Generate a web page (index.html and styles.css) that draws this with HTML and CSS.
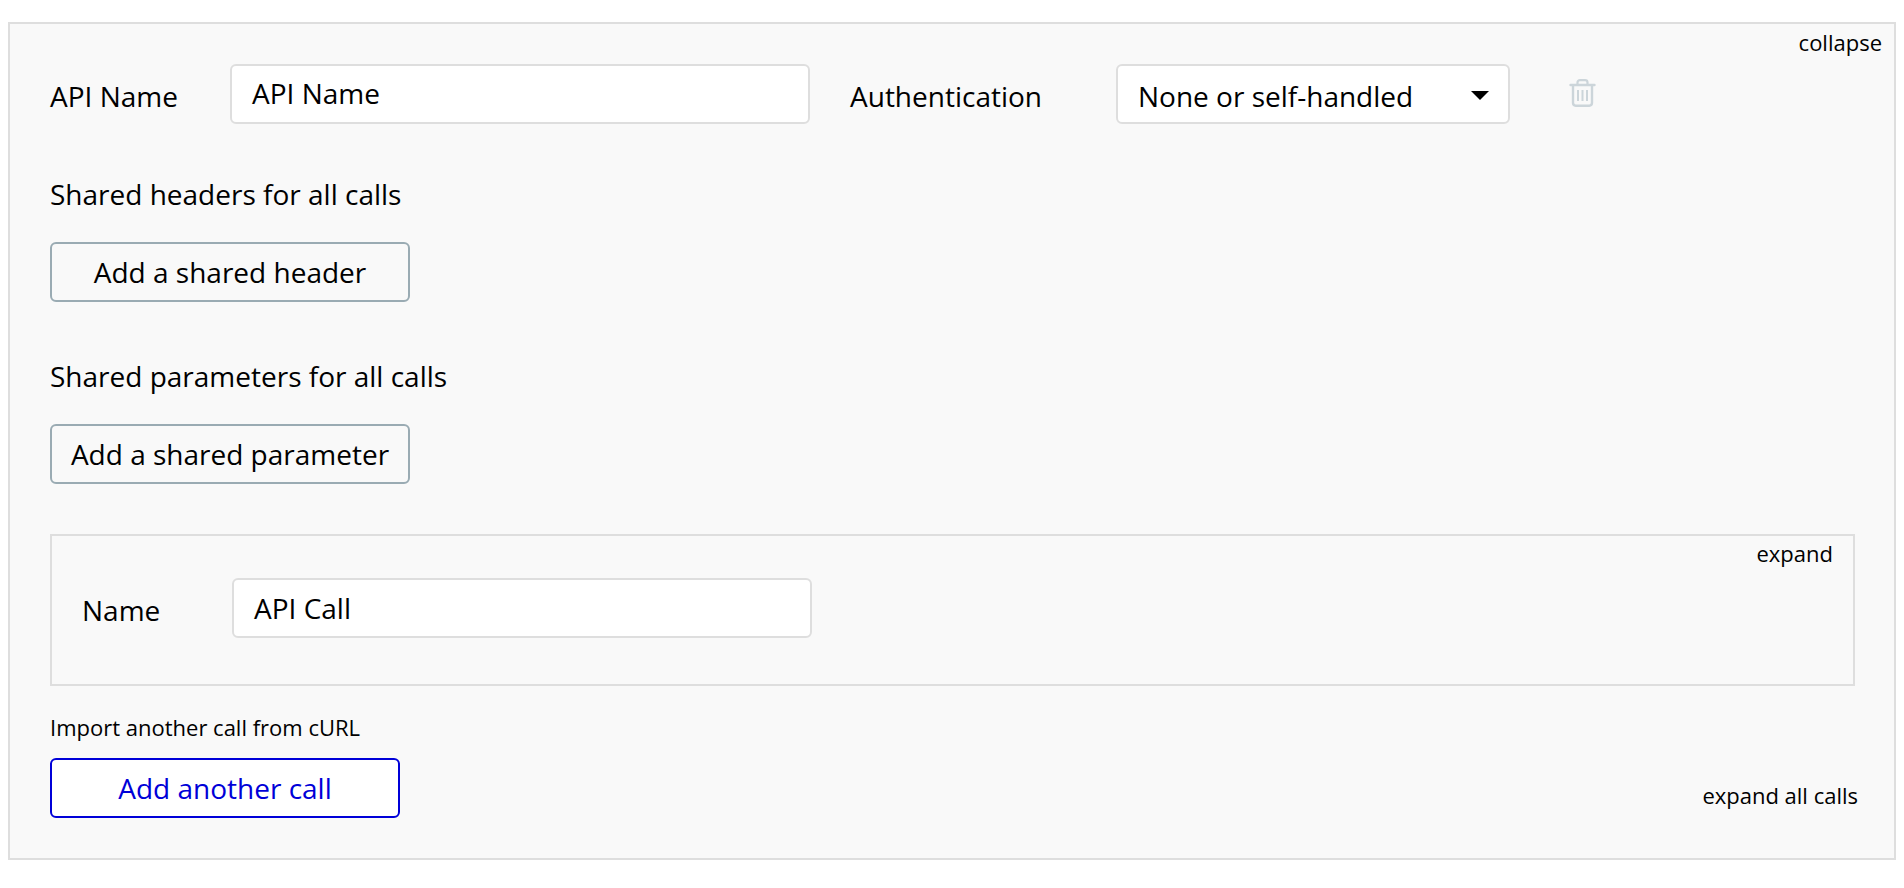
FILE: index.html
```html
<!DOCTYPE html>
<html lang="en">
<head>
<meta charset="utf-8">
<title>API Connector</title>
<link rel="stylesheet" href="styles.css">
</head>
<body>
<section class="panel">
  <a class="toggle toggle-panel">collapse</a>
  <div class="row top-row">
    <label class="label label-api">API Name</label>
    <div class="field field-api">API Name</div>
    <label class="label label-auth">Authentication</label>
    <div class="field select">
      <span>None or self-handled</span>
      <span class="caret"></span>
    </div>
    <svg class="trash" viewBox="0 0 27 28" width="27" height="28" aria-hidden="true">
      <path d="M1.500 6h24" fill="none" stroke="#ccd5da" stroke-width="2.400" stroke-linecap="round"/>
      <path d="M8.500 6V3.500C8.500 2 9.500 1.200 11 1.200h5C17.500 1.200 18.500 2 18.500 3.500V6" fill="none" stroke="#ccd5da" stroke-width="2.200"/>
      <path d="M4 6.500v17.300c0 1.700 1 2.900 2.700 2.900h13.600c1.700 0 2.700-1.200 2.700-2.900V6.500" fill="none" stroke="#ccd5da" stroke-width="2.400"/>
      <path d="M9 11v11M13.500 11v11M18 11v11" fill="none" stroke="#ccd5da" stroke-width="2"/>
    </svg>
  </div>
  <h3 class="heading heading-headers">Shared headers for all calls</h3>
  <button class="btn btn-shared">Add a shared header</button>
  <h3 class="heading heading-params">Shared parameters for all calls</h3>
  <button class="btn btn-shared">Add a shared parameter</button>
  <div class="call">
    <a class="toggle toggle-call">expand</a>
    <label class="label label-name">Name</label>
    <div class="field field-call">API Call</div>
  </div>
  <p class="import">Import another call from cURL</p>
  <div class="row foot-row">
    <button class="btn btn-add">Add another call</button>
    <a class="expand-all">expand all calls</a>
  </div>
</section>
</body>
</html>
```
FILE: styles.css
```css
* { box-sizing: border-box; }
html, body { margin: 0; background: #fff; }
body {
  padding: 22px 8px 0;
  font-family: "Open Sans", "Noto Sans", sans-serif;
  color: #000;
}
.panel {
  position: relative;
  height: 838px;
  padding: 40px 40px 0 40px;
  background: #f9f9f9;
  border: 2px solid #dedede;
}
.row { display: flex; }
.top-row { align-items: flex-start; height: 60px; }
.label { font-size: 28px; line-height: 38px; }
.label-api { width: 180px; padding-top: 13px; }
.label-auth { width: 266px; margin-left: 40px; padding-top: 13px; }
.field {
  height: 60px;
  background: #fff;
  border: 2px solid #dedede;
  border-radius: 6px;
  font-size: 28px;
  line-height: 54px;
  padding-left: 20px;
}
.field-api { width: 580px; }
.select {
  display: flex;
  align-items: center;
  justify-content: space-between;
  width: 394px;
  padding-top: 3px;
  padding-right: 19px;
  line-height: 52px;
}
.caret {
  width: 0;
  height: 0;
  border-left: 9px solid transparent;
  border-right: 9px solid transparent;
  border-top: 9px solid #000;
}
.trash { margin: 15px 0 0 59px; }
.heading {
  margin: 0;
  font-size: 28px;
  font-weight: 400;
  line-height: 38px;
}
.heading-headers { margin-top: 51px; }
.heading-params { margin-top: 55px; }
.btn {
  display: block;
  font-family: inherit;
  font-size: 28px;
  height: 60px;
  padding: 0;
  border-radius: 6px;
  cursor: pointer;
}
.btn-shared {
  width: 360px;
  margin-top: 29px;
  background: #f9f9f9;
  border: 2px solid #9aabb3;
  color: #000;
}
.call {
  position: relative;
  display: flex;
  align-items: flex-start;
  width: 1805px;
  height: 152px;
  margin-top: 50px;
  padding: 42px 0 0 30px;
  border: 2px solid #dedede;
}
.label-name { width: 150px; padding-top: 13px; }
.field-call { width: 580px; line-height: 56px; }
.import {
  margin: 26px 0 0;
  font-size: 22px;
  line-height: 30px;
}
.foot-row {
  justify-content: space-between;
  align-items: center;
  margin-top: 16px;
  height: 60px;
  padding-right: 1px;
  width: 1809px;
}
.btn-add {
  width: 350px;
  background: #fff;
  border: 2px solid #0000d8;
  color: #0000d8;
}
.expand-all { font-size: 22px; line-height: 30px; padding-top: 13px; }
.toggle { position: absolute; font-size: 22px; line-height: 30px; }
.toggle-panel { top: 3px; right: 12px; }
.toggle-call { top: 2px; right: 20px; }
```
